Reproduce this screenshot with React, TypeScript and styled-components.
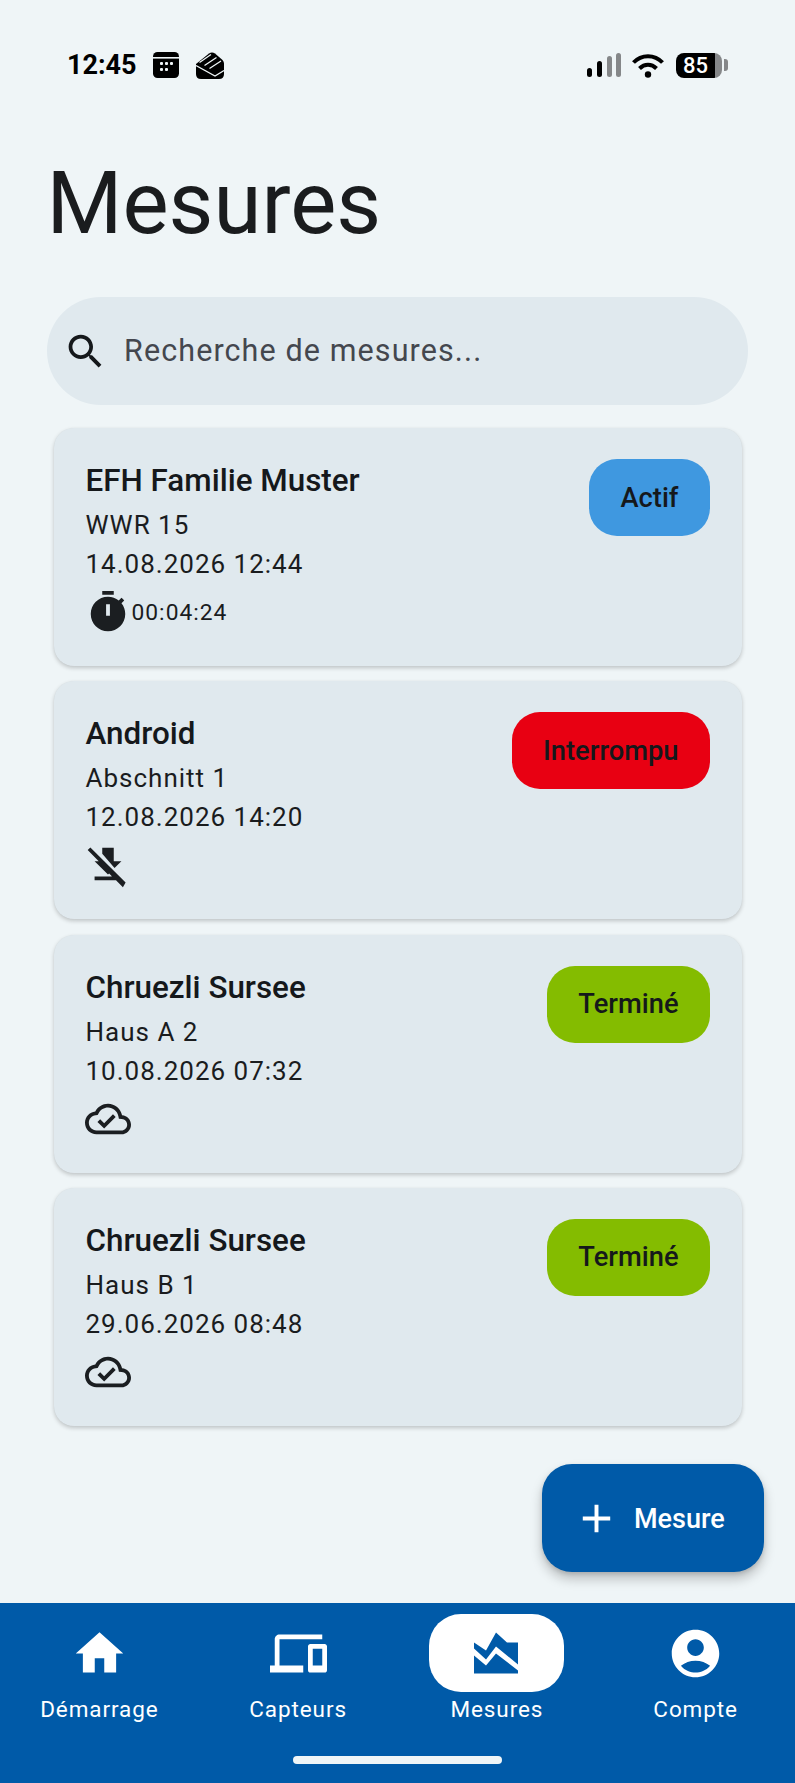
import React from 'react';
import styled, { createGlobalStyle } from 'styled-components';

const GlobalStyle = createGlobalStyle`
    html, body {
        margin: 0;
        padding: 0;
        background: #eff5f7;
        font-family: Roboto, "Liberation Sans", sans-serif;
    }
`;

const ICONS = {
    search: 'M15.5 14h-.79l-.28-.27C15.41 12.59 16 11.11 16 9.5 16 5.91 13.09 3 9.5 3S3 5.91 3 9.5 5.91 16 9.5 16c1.61 0 3.09-.59 4.23-1.57l.27.28v.79l5 4.99L20.49 19l-4.99-5zm-6 0C7.01 14 5 11.99 5 9.5S7.01 5 9.5 5 14 7.01 14 9.5 11.99 14 9.5 14z',
    timer: 'M15 1H9v2h6V1zm-4 13h2V8h-2v6zm8.03-6.61l1.42-1.42c-.43-.51-.9-.99-1.41-1.41l-1.42 1.42C16.07 4.74 14.12 4 12 4c-4.97 0-9 4.03-9 9s4.02 9 9 9 9-4.03 9-9c0-2.12-.74-4.07-1.97-5.61z',
    downloadOff: 'M9 6.17V3h6v7h4l-3.59 3.59L9 6.17zM21.19 21.19 2.81 2.81 1.39 4.22 7.17 10H5l7 7 .59-.59 1.41 1.41-.17.18H5v2h11.17l3.61 3.61z',
    cloudDone: 'M19.35 10.04C18.67 6.59 15.64 4 12 4 9.11 4 6.6 5.64 5.35 8.04 2.34 8.36 0 10.91 0 14c0 3.31 2.69 6 6 6h13c2.76 0 5-2.24 5-5 0-2.64-2.05-4.78-4.65-4.96zM19 18H6c-2.21 0-4-1.79-4-4 0-2.05 1.53-3.76 3.56-3.97l1.07-.11.5-.95C8.08 7.14 9.94 6 12 6c2.62 0 4.88 1.86 5.39 4.43l.3 1.5 1.53.11c1.56.1 2.78 1.41 2.78 2.96 0 1.65-1.35 3-3 3zm-9-3.82l-2.09-2.09L6.5 13.5 10 17l6.01-6.01-1.41-1.41z',
    add: 'M19 13h-6v6h-2v-6H5v-2h6V5h2v6h6v2z',
    home: 'M10 20v-6h4v6h5v-8h3L12 3 2 12h3v8z',
    devices: 'M4 6h18V4H4c-1.1 0-2 .9-2 2v11H0v3h14v-3H4V6zm19 2h-6c-.55 0-1 .45-1 1v10c0 .55.45 1 1 1h6c.55 0 1-.45 1-1V9c0-.55-.45-1-1-1zm-1 9h-4v-7h4v7z',
    chart: 'M2.53 7.37 7.58 10.74 11.79 3.16 16.42 7.37H21.05V16.63L11.79 9.05 7.58 14.53 2.53 9.89zM2.53 12.84 7.58 17.05 11.79 12 21.05 19.16V20.42H2.53z',
    account: 'M12 2C6.48 2 2 6.48 2 12s4.48 10 10 10 10-4.48 10-10S17.52 2 12 2zm0 4c1.93 0 3.5 1.57 3.5 3.5S13.93 13 12 13s-3.5-1.57-3.5-3.5S10.07 6 12 6zm0 14c-2.03 0-4.43-.82-6.14-2.88C7.55 15.8 9.68 15 12 15s4.45.8 6.14 2.12C16.43 19.18 14.03 20 12 20z',
};

const measurements = [
    { name: 'EFH Familie Muster', section: 'WWR 15', date: '14.08.2026 12:44', status: 'Actif', color: '#3f98e0', state: 'timer', elapsed: '00:04:24' },
    { name: 'Android', section: 'Abschnitt 1', date: '12.08.2026 14:20', status: 'Interrompu', color: '#e80012', state: 'downloadOff' },
    { name: 'Chruezli Sursee', section: 'Haus A 2', date: '10.08.2026 07:32', status: 'Terminé', color: '#84bc00', state: 'cloudDone' },
    { name: 'Chruezli Sursee', section: 'Haus B 1', date: '29.06.2026 08:48', status: 'Terminé', color: '#84bc00', state: 'cloudDone' },
];

const navItems = [
    { label: 'Démarrage', icon: 'home', active: false },
    { label: 'Capteurs', icon: 'devices', active: false },
    { label: 'Mesures', icon: 'chart', active: true },
    { label: 'Compte', icon: 'account', active: false },
];

const Icon = ({ name, size, color = 'currentColor' }: { name: keyof typeof ICONS; size: number; color?: string }) => (
    <svg width={size} height={size} viewBox="0 0 24 24" fill={color} style={{ flexShrink: 0, display: 'block' }}>
        <path fillRule="evenodd" d={ICONS[name]} />
    </svg>
);

const StatusBarLeft = () => (
    <StatusGroup>
        <StatusTime>12:45</StatusTime>
        <svg width="26" height="26" viewBox="0 0 26 26">
            <rect width="26" height="26" rx="4.5" fill="#000" />
            <rect x="0" y="5" width="26" height="1.6" fill="#eff5f7" />
            <g fill="#eff5f7">
                <rect x="7" y="10" width="3" height="3" rx="1" />
                <rect x="12" y="10" width="3" height="3" rx="1" />
                <rect x="17" y="10" width="3" height="3" rx="1" />
                <rect x="7" y="16" width="3" height="3" rx="1" />
                <rect x="12" y="16" width="3" height="3" rx="1" />
            </g>
        </svg>
        <svg width="28" height="27" viewBox="0 0 28 27" style={{ marginLeft: 17 }}>
            <path d="M0 12 13 1.5Q16 -.5 19 1.5L26.5 8Q28 9.5 28 11.5V22Q28 27 23 27H5Q0 27 0 22z" fill="#000" />
            <path d="M0 13.5 19 24 28 18.5M3.5 10.5 15 2.5M8.5 13.5 20.5 5.5M13.5 16.5 25 9" fill="none" stroke="#eff5f7" strokeWidth="1.3" />
        </svg>
    </StatusGroup>
);

const StatusBarRight = () => (
    <StatusGroup>
        <svg width="34" height="24" viewBox="0 0 34 24" style={{ marginRight: 11 }}>
            <rect x="0" y="15" width="5" height="9" rx="2.5" fill="#000" />
            <rect x="10" y="8" width="5" height="16" rx="2.5" fill="#000" />
            <rect x="20" y="3" width="5" height="21" rx="2.5" fill="#858789" />
            <rect x="29" y="0" width="5" height="24" rx="2.5" fill="#858789" />
        </svg>
        <svg width="32" height="25" viewBox="0 0 32 25" style={{ marginRight: 12 }}>
            <path d="M1.5 9.5C9.5 1 22.5 1 30.5 9.5" fill="none" stroke="#000" strokeWidth="4" />
            <path d="M7.5 15.5C12.5 10.5 19.5 10.5 24.5 15.5" fill="none" stroke="#000" strokeWidth="4" />
            <circle cx="16" cy="21.5" r="3.2" fill="#000" />
        </svg>
        <Battery>85</Battery>
        <BatteryCap />
    </StatusGroup>
);

const App = () => (
    <Page>
        <GlobalStyle />
        <StatusRow>
            <StatusBarLeft />
            <StatusBarRight />
        </StatusRow>
        <Heading>Mesures</Heading>
        <SearchBar>
            <Icon name="search" size={45} color="#15181b" />
            <SearchText>Recherche de mesures...</SearchText>
        </SearchBar>
        <CardList>
            {measurements.map(item => (
                <Card key={item.date}>
                    <CardBody>
                        <CardTitle>{item.name}</CardTitle>
                        <CardLine>{item.section}</CardLine>
                        <CardLine>{item.date}</CardLine>
                        <StateRow>
                            <Icon name={item.state as keyof typeof ICONS} size={46} color="#1b1e21" />
                            {item.elapsed && <Elapsed>{item.elapsed}</Elapsed>}
                        </StateRow>
                    </CardBody>
                    <StatusBadge $color={item.color}>{item.status}</StatusBadge>
                </Card>
            ))}
        </CardList>
        <Fab>
            <Icon name="add" size={47} />
            <FabLabel>Mesure</FabLabel>
        </Fab>
        <BottomNav>
            <NavRow>
                {navItems.map(item => (
                    <NavItem key={item.label}>
                        <NavIconWrap $active={item.active}>
                            <Icon name={item.icon as keyof typeof ICONS} size={57} />
                        </NavIconWrap>
                        <NavLabel>{item.label}</NavLabel>
                    </NavItem>
                ))}
            </NavRow>
            <HomeIndicator />
        </BottomNav>
    </Page>
);

export default App;

const Page = styled.div`
    position: relative;
    display: flex;
    flex-direction: column;
    width: 795px;
    height: 1783px;
    overflow: hidden;
    background: #eff5f7;
    color: #1a1c1e;
`;

const StatusRow = styled.div`
    display: flex;
    justify-content: space-between;
    align-items: center;
    height: 26px;
    padding: 52px 67px 0;
`;

const StatusGroup = styled.div`
    display: flex;
    align-items: center;
`;

const StatusTime = styled.span`
    width: 86px;
    font-size: 27px;
    font-weight: 700;
    color: #000;
`;

const Battery = styled.span`
    display: flex;
    align-items: center;
    justify-content: center;
    box-sizing: border-box;
    width: 46px;
    height: 25px;
    padding-right: 7px;
    border-radius: 8px;
    background: linear-gradient(90deg, #000 85%, #858789 85%);
    color: #fff;
    font-size: 22px;
    font-weight: 500;
`;

const BatteryCap = styled.span`
    width: 4px;
    height: 12px;
    margin-left: 2px;
    border-radius: 0 3px 3px 0;
    background: #858789;
`;

const Heading = styled.h1`
    margin: 71px 0 0 46.5px;
    font-size: 87px;
    font-weight: 400;
    line-height: 108px;
    color: #1a1c1e;
`;

const SearchBar = styled.div`
    display: flex;
    align-items: center;
    box-sizing: border-box;
    width: 701px;
    height: 108px;
    margin: 40px 0 0 46.5px;
    padding-left: 16px;
    border-radius: 54px;
    background: #e0e9ee;
`;

const SearchText = styled.span`
    margin: 0 0 2px 16.5px;
    font-size: 30.5px;
    letter-spacing: 1.1px;
    color: #44474e;
`;

const CardList = styled.div`
    display: flex;
    flex-direction: column;
    gap: 15.3px;
    margin: 23px 53.5px 0;
`;

const Card = styled.div`
    display: flex;
    justify-content: space-between;
    align-items: flex-start;
    box-sizing: border-box;
    height: 238px;
    padding: 31px 32px;
    border-radius: 20px;
    background: #e0e9ee;
    box-shadow: 0 2px 4px rgba(0, 0, 0, 0.2), 0 0 1px rgba(0, 0, 0, 0.06);
`;

const CardBody = styled.div`
    display: flex;
    flex-direction: column;
`;

const CardTitle = styled.div`
    margin-bottom: 3px;
    font-size: 31.4px;
    font-weight: 500;
    line-height: 44px;
    color: #15181b;
`;

const CardLine = styled.div`
    font-size: 26px;
    line-height: 39px;
    letter-spacing: 1px;
    color: #1a1c1e;
`;

const StateRow = styled.div`
    display: flex;
    align-items: center;
    margin: 5px 0 0 -1px;
`;

const Elapsed = styled.span`
    margin-left: 1px;
    font-size: 22.8px;
    letter-spacing: 1px;
    color: #1a1c1e;
`;

const StatusBadge = styled.div<{ $color: string }>`
    display: flex;
    align-items: center;
    justify-content: center;
    box-sizing: border-box;
    height: 77px;
    padding: 0 31px;
    border-radius: 28px;
    background: ${props => props.$color};
    font-size: 27.3px;
    font-weight: 500;
    color: #15181b;
`;

const Fab = styled.div`
    position: absolute;
    top: 1464px;
    left: 542px;
    display: flex;
    align-items: center;
    box-sizing: border-box;
    width: 222px;
    height: 108px;
    padding: 1px 0 0 31px;
    border-radius: 30px;
    background: #005aa8;
    color: #fff;
    box-shadow: 0 7px 12px rgba(0, 0, 0, 0.22), 0 2px 4px rgba(0, 0, 0, 0.12);
`;

const FabLabel = styled.span`
    margin-left: 14px;
    font-size: 27px;
    font-weight: 500;
`;

const BottomNav = styled.nav`
    display: flex;
    flex-direction: column;
    align-items: center;
    box-sizing: border-box;
    height: 180px;
    margin-top: auto;
    padding-top: 11px;
    background: #005aa8;
`;

const NavRow = styled.div`
    display: grid;
    grid-template-columns: repeat(4, 198.75px);
`;

const NavItem = styled.div`
    display: flex;
    flex-direction: column;
    align-items: center;
`;

const NavIconWrap = styled.div<{ $active: boolean }>`
    display: flex;
    align-items: center;
    justify-content: center;
    width: 135px;
    height: 78px;
    border-radius: 32px;
    background: ${props => (props.$active ? '#fff' : 'transparent')};
    color: ${props => (props.$active ? '#005aa8' : '#fff')};
`;

const NavLabel = styled.span`
    margin-top: 2px;
    font-size: 22.5px;
    font-weight: 400;
    line-height: 30px;
    letter-spacing: 0.9px;
    color: #fff;
`;

const HomeIndicator = styled.div`
    width: 209px;
    height: 8px;
    margin-top: 32px;
    border-radius: 4px;
    background: #eff5f7;
`;
